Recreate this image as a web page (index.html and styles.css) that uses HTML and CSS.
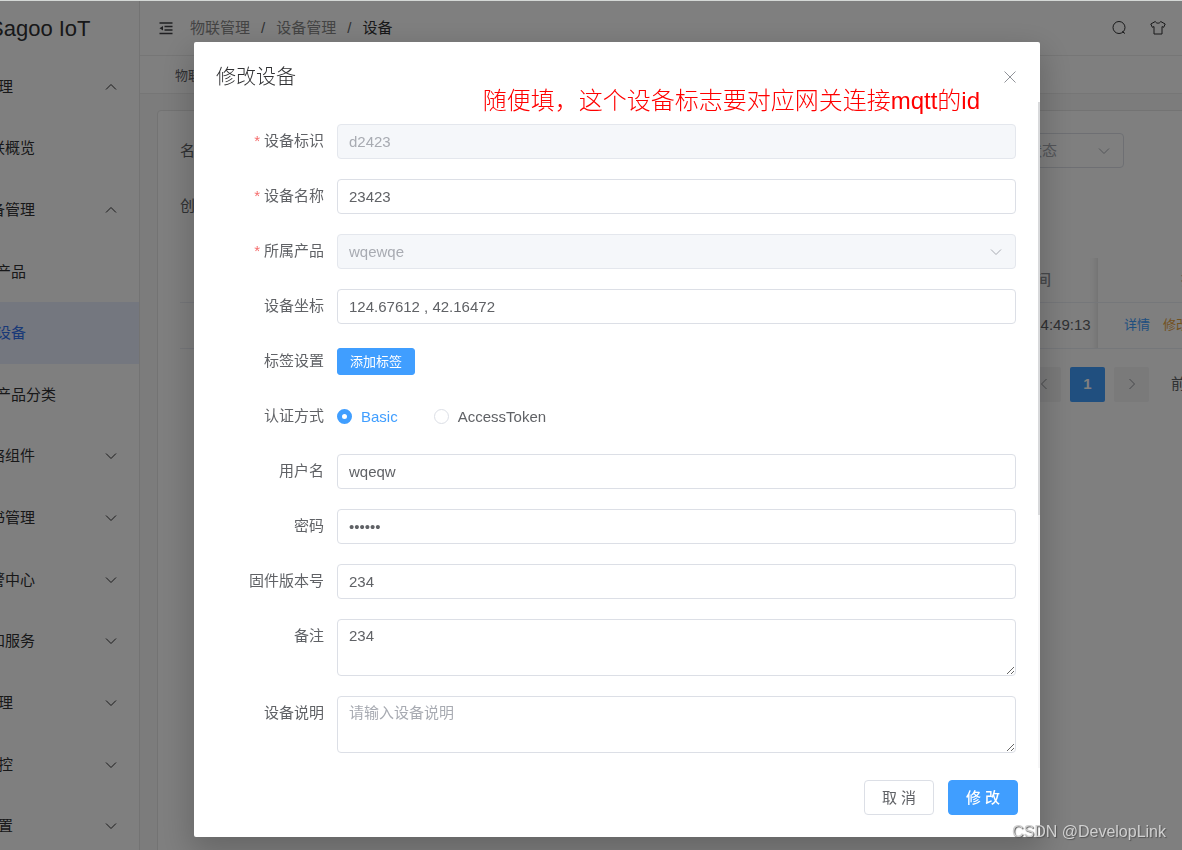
FILE: index.html
```html
<!DOCTYPE html>
<html lang="zh-CN">
<head>
<meta charset="utf-8">
<title>Sagoo IoT</title>
<link rel="stylesheet" href="styles.css">
</head>
<body>
<svg class="sprite" aria-hidden="true">
  <symbol id="down" viewBox="0 0 12 12"><path d="M1 3.5 6 8.5 11 3.5"/></symbol>
  <symbol id="up" viewBox="0 0 12 12"><path d="M1 8.5 6 3.5 11 8.5"/></symbol>
  <symbol id="left" viewBox="0 0 12 12"><path d="M8.5 1 3.5 6 8.5 11"/></symbol>
  <symbol id="right" viewBox="0 0 12 12"><path d="M3.5 1 8.5 6 3.5 11"/></symbol>
</svg>

<div class="app">
  <aside class="sidebar">
    <div class="logo">Sagoo IoT</div>
    <nav class="menu">
      <a href="#" class="menu-item">物联管理<svg class="icon"><use href="#up"/></svg></a>
      <a href="#" class="menu-item level-2">物联概览</a>
      <a href="#" class="menu-item level-2">设备管理<svg class="icon"><use href="#up"/></svg></a>
      <a href="#" class="menu-item level-3">产品</a>
      <a href="#" class="menu-item level-3 active">设备</a>
      <a href="#" class="menu-item level-3">产品分类</a>
      <a href="#" class="menu-item level-2">网络组件<svg class="icon"><use href="#down"/></svg></a>
      <a href="#" class="menu-item level-2">证书管理<svg class="icon"><use href="#down"/></svg></a>
      <a href="#" class="menu-item level-2">告警中心<svg class="icon"><use href="#down"/></svg></a>
      <a href="#" class="menu-item level-2">通知服务<svg class="icon"><use href="#down"/></svg></a>
      <a href="#" class="menu-item">系统管理<svg class="icon"><use href="#down"/></svg></a>
      <a href="#" class="menu-item">系统监控<svg class="icon"><use href="#down"/></svg></a>
      <a href="#" class="menu-item">系统设置<svg class="icon"><use href="#down"/></svg></a>
    </nav>
  </aside>

  <main class="main">
    <header class="topbar">
      <svg class="fold" viewBox="0 0 14 14"><path d="M0.500 2h13M5.500 5.500h8M5.500 9h8M0.500 12.500h13" /><path class="fill" d="M0.500 7.200 4 4.900V9.500z"/></svg>
      <div class="crumbs">
        <a href="#">物联管理</a><span>/</span><a href="#">设备管理</a><span>/</span><span class="current">设备</span>
      </div>
      <div class="tools">
        <svg class="tool" viewBox="0 0 16 16"><circle cx="8" cy="7.500" r="6"/><path d="M11 11.500 14 13.500"/></svg>
        <svg class="tool" viewBox="0 0 16 16"><path d="M5.300 1.500 0.800 4 2.300 7.300 4 6.600V14H12V6.600L13.700 7.300 15.200 4 10.700 1.500C10 3.700 6 3.700 5.300 1.500z"/></svg>
      </div>
    </header>
    <div class="tabs"><a href="#">物联概览</a></div>

    <section class="content">
      <div class="card">
        <form class="filters">
          <div class="filter-row">
            <span>名称</span>
            <div class="select-wrap state">
              <select aria-label="设备状态"><option>设备状态</option></select>
              <svg class="icon"><use href="#down"/></svg>
            </div>
          </div>
          <div class="filter-row"><span>创建时间</span></div>
        </form>
        <table class="devices">
          <thead><tr><th></th><th class="time">创建时间</th><th class="ops">操作</th></tr></thead>
          <tbody><tr><td></td><td class="time">2023-02-09 14:49:13</td><td class="ops"><div class="links"><a href="#">详情</a><a href="#" class="warn">修改</a><a href="#">删除</a></div></td></tr></tbody>
        </table>
        <div class="pager">
          <button type="button" aria-label="上一页"><svg class="icon"><use href="#left"/></svg></button>
          <button type="button" class="on">1</button>
          <button type="button" aria-label="下一页"><svg class="icon"><use href="#right"/></svg></button>
          <span class="jump">前往</span>
        </div>
      </div>
    </section>
  </main>
</div>

<div class="overlay">
  <div class="dialog" role="dialog" aria-labelledby="dialog-title">
    <div class="dialog-head">
      <h2 id="dialog-title">修改设备</h2>
      <button type="button" class="close" aria-label="关闭"><svg viewBox="0 0 12 12"><path d="M.5.5 11.500 11.500M11.500.5.5 11.500"/></svg></button>
    </div>
    <p class="note">随便填，这个设备标志要对应网关连接mqtt的id</p>
    <div class="scrollbar"><div class="thumb"></div></div>

    <form class="form">
      <div class="item"><label class="required" for="key">设备标识</label><input id="key" type="text" value="d2423" disabled></div>
      <div class="item"><label class="required" for="name">设备名称</label><input id="name" type="text" value="23423"></div>
      <div class="item"><label class="required" for="product">所属产品</label>
        <div class="select-wrap"><select id="product" disabled><option>wqewqe</option></select><svg class="icon"><use href="#down"/></svg></div>
      </div>
      <div class="item"><label for="coord">设备坐标</label><input id="coord" type="text" value="124.67612 , 42.16472"></div>
      <div class="item"><label for="tags">标签设置</label><button id="tags" type="button" class="btn small primary">添加标签</button></div>
      <div class="item"><span class="label">认证方式</span>
        <div class="radios">
          <label><input type="radio" name="auth" checked>Basic</label>
          <label><input type="radio" name="auth">AccessToken</label>
        </div>
      </div>
      <div class="item"><label for="user">用户名</label><input id="user" type="text" value="wqeqw"></div>
      <div class="item"><label for="pass">密码</label><input id="pass" type="password" value="123456"></div>
      <div class="item"><label for="version">固件版本号</label><input id="version" type="text" value="234"></div>
      <div class="item"><label for="remark">备注</label><textarea id="remark">234</textarea></div>
      <div class="item"><label for="desc">设备说明</label><textarea id="desc" placeholder="请输入设备说明"></textarea></div>
    </form>

    <div class="dialog-foot">
      <button type="button" class="btn">取 消</button>
      <button type="button" class="btn primary strong">修 改</button>
    </div>
  </div>
</div>
<div class="watermark">CSDN @DevelopLink</div>
</body>
</html>
```

FILE: styles.css
```css
* { box-sizing: border-box; }

body {
  margin: 0;
  border-top: 1px solid #d4d8d6;
  overflow: hidden;
  font: 15px/20px "Liberation Sans", "Noto Sans CJK SC", sans-serif;
  color: #606266;
}

a { color: inherit; text-decoration: none; }
button, input, select, textarea { font: inherit; color: inherit; margin: 0; }
.sprite { position: absolute; width: 0; height: 0; }
.icon { width: 12px; height: 12px; fill: none; stroke: currentColor; stroke-width: 1; flex: none; }

/* page behind the dialog, scrolled sideways */
.app {
  display: flex;
  width: calc(100% + 254px);
  min-height: 100vh;
  margin-left: -102px;
}

.sidebar { width: 242px; flex: none; border-right: 1px solid #e6e6e6; color: #303133; }
.logo { height: 55px; padding-left: 91px; font-size: 22px; line-height: 55px; }
.menu { display: grid; grid-auto-rows: 1fr; min-height: 801px; }
.menu-item { display: flex; align-items: center; justify-content: space-between; padding: 0 22px 0 55px; }
.level-2 { padding-left: 77px; }
.level-3 { padding-left: 98px; }
.menu-item.active { background: #e9eeff; color: #3373f0; }

.main { flex: 1; min-width: 0; display: flex; flex-direction: column; }
.topbar { display: flex; align-items: center; height: 55px; padding: 0 168px 0 19px; border-bottom: 1px solid #ececec; }
.fold { width: 14px; height: 14px; margin-right: 17px; fill: none; stroke: #404144; stroke-width: 1.5; }
.fold .fill { fill: #404144; stroke: none; }
.crumbs { display: flex; gap: 11px; color: #888; }
.crumbs span { color: #606266; }
.crumbs .current { color: #303133; }
.tools { display: flex; gap: 23px; margin-left: auto; }
.tool { width: 16px; height: 16px; fill: none; stroke: #303133; stroke-width: 1; }
.tabs { height: 38px; padding-left: 35px; border-bottom: 1px solid #ececec; font-size: 13px; line-height: 40px; }

.content { flex: 1; display: flex; padding: 16px 17px 0; background: #f8f8f8; }
.card { flex: 1; padding: 22px; border: 1px solid #e6e6e6; border-radius: 4px; background: #fff; }
.filters { display: grid; gap: 20px; }
.filter-row { display: flex; align-items: center; justify-content: space-between; height: 35px; padding-right: 170px; }
.state { flex: none; width: 139px; color: #a8abb2; }
.select-wrap { position: relative; display: flex; }
.select-wrap .icon { position: absolute; right: 14px; top: 12px; color: #a8abb2; pointer-events: none; }

.devices { width: 100%; margin-top: 35px; border-collapse: collapse; table-layout: fixed; }
.devices th, .devices td { padding: 0; border-bottom: 1px solid #ebeef5; text-align: center; }
.devices th { height: 44px; color: #909399; font-weight: 500; }
.devices td { height: 46px; }
.devices .time { width: 154px; box-shadow: inset -10px 0 10px -10px rgba(0, 0, 0, .18); }
.devices .ops { width: 196px; }
.links { display: flex; gap: 13px; padding-left: 26px; color: #409eff; font-size: 13px; }
.links .warn { color: #e6a23c; }

.pager { display: flex; align-items: center; justify-content: flex-end; gap: 9px; margin-top: 18px; }
.pager button { display: grid; place-items: center; width: 35px; height: 35px; padding: 0; border: 0; border-radius: 2px; background: #f4f4f5; color: #909399; }
.pager .on { background: #409eff; color: #fff; font-weight: bold; }
.jump { width: 136px; padding-left: 13px; }

/* dialog */
.overlay { position: fixed; inset: 1px 0 0; padding: 41px 142px 0 194px; background: rgba(0, 0, 0, .5); }
.dialog { position: relative; border-radius: 2px; background: #fff; box-shadow: 0 12px 32px 4px rgba(0, 0, 0, .2); }
.dialog-head { display: flex; align-items: center; justify-content: space-between; height: 60px; padding: 9px 24px 0 22px; }
.dialog-head h2 { margin: 0; color: #303133; font-size: 20px; font-weight: 300; line-height: 24px; }
.close { display: flex; padding: 0; border: 0; background: none; }
.close svg { width: 12px; height: 12px; stroke: #909399; }
.note { position: absolute; right: 60px; top: 43px; margin: 0; color: #f00; font-size: 24px; font-weight: 300; line-height: 32px; white-space: nowrap; }
.scrollbar { position: absolute; right: 0; top: 60px; bottom: 69px; width: 2px; background: #f6f6f7; }
.thumb { height: 62%; background: #d8d9db; }

.form { display: grid; gap: 20px; padding: 22px 24px 0 22px; }
.item { display: flex; align-items: center; min-height: 35px; }
.item > label, .item > .label { align-self: flex-start; width: 108px; margin-right: 13px; flex: none; text-align: right; line-height: 34px; }
.required::before { content: "*"; margin-right: 4px; color: #f56c6c; }
.item > input, .item > textarea, .item > .select-wrap { flex: 1; min-width: 0; }
.form input[type="text"], .form input[type="password"], .form textarea, .select-wrap select {
  height: 35px;
  padding: 0 11px;
  border: 1px solid #dcdfe6;
  border-radius: 4px;
  background: #fff;
  outline: 0;
}
.select-wrap select { flex: 1; min-width: 0; appearance: none; }
.form textarea { display: block; height: 57px; padding: 6px 11px; resize: vertical; }
.form textarea::placeholder { color: #a8abb2; }
.form input:disabled, .form select:disabled { border-color: #e4e7ed; background: #f5f7fa; color: #a8abb2; opacity: 1; }

.radios { display: flex; gap: 36px; }
.radios label { display: flex; align-items: center; gap: 9px; }
.radios label:has(:checked) { color: #409eff; }
.radios input { appearance: none; width: 15px; height: 15px; border: 1px solid #dcdfe6; border-radius: 50%; background: #fff; }
.radios input:checked { border: 5px solid #409eff; }

.btn { height: 35px; padding: 0 16px; border: 1px solid #dcdfe6; border-radius: 4px; background: #fff; }
.btn.primary { border-color: #409eff; background: #409eff; color: #fff; }
.btn.small { height: 27px; padding: 0 12px; border-radius: 3px; font-size: 13px; }
.btn.strong { font-weight: 500; }
.dialog-foot { display: flex; justify-content: flex-end; gap: 14px; padding: 27px 22px 22px; }
.dialog-foot .btn { min-width: 70px; }

.watermark {
  position: fixed;
  right: 16px;
  bottom: 8px;
  color: #d0d0d0;
  font-size: 16px;
  text-shadow: 1px 1px 1px #555;
}
```
